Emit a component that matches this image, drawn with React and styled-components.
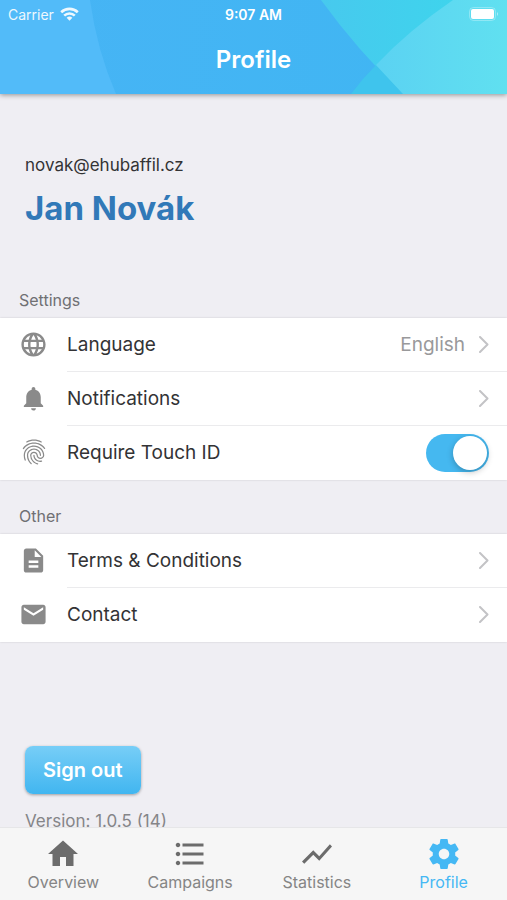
import { useState } from "react";
import styled, { createGlobalStyle } from "styled-components";
import {
  MdDescription,
  MdEmail,
  MdFingerprint,
  MdFormatListBulleted,
  MdHome,
  MdLanguage,
  MdNotifications,
  MdShowChart,
} from "react-icons/md";

const GlobalStyle = createGlobalStyle`
  * {
    box-sizing: border-box;
  }
  body {
    margin: 0;
    background: #efeef3;
    color: #333335;
    font-family: Inter, "Liberation Sans", sans-serif;
  }
`;

const Page = styled.div`
  display: flex;
  flex-direction: column;
  height: 100vh;
`;
const Header = styled.header`
  position: relative;
  z-index: 1;
  flex: none;
  color: white;
  background: linear-gradient(90deg, #47b4f5, #3fb6f2);
  box-shadow: 0 1px 5px rgba(0, 0, 0, 0.4);
`;
const HeaderArt = styled.svg`
  position: absolute;
  inset: 0;
  z-index: -1;
  width: 100%;
  height: 100%;
`;
const StatusBar = styled.div`
  display: grid;
  grid-template-columns: 1fr auto 1fr;
  align-items: center;
  height: 28px;
  padding: 0 8px;
  font-size: 14px;
`;
const Carrier = styled.span`
  display: flex;
  align-items: center;
  gap: 6px;
  opacity: 0.9;
`;
const Time = styled.time`
  font-weight: 600;
`;
const Battery = styled.svg`
  justify-self: end;
`;
const Title = styled.h1`
  margin: 0;
  padding-top: 14px;
  height: 66px;
  font-size: 24px;
  line-height: 36px;
  font-weight: 600;
  text-align: center;
`;

const Main = styled.main`
  flex: 1;
  min-height: 0;
  overflow-y: auto;
  scrollbar-width: none;
`;
const User = styled.section`
  padding: 59px 25px 56px;
`;
const Email = styled.p`
  margin: 0;
  font-size: 17px;
  line-height: 24px;
`;
const Name = styled.h2`
  margin: 11px 0 0;
  color: #3179b8;
  font-size: 33px;
  line-height: 40px;
  font-weight: 700;
`;
const GroupTitle = styled.h3`
  margin: 0;
  padding: 4px 19px 6px;
  color: #707073;
  font-size: 16px;
  line-height: 24px;
  font-weight: 400;
`;
const List = styled.ul`
  margin: 0 0 20px;
  padding: 0;
  list-style: none;
  background: white;
  box-shadow: 0 0 2px rgba(0, 0, 0, 0.15);
`;
const Item = styled.li`
  display: flex;
  align-items: stretch;
  height: 54px;
  color: #8a8a8a;
`;
const ItemIcon = styled.span`
  display: flex;
  flex: none;
  align-items: center;
  justify-content: center;
  width: 67px;
  padding-bottom: 2px;
`;
const rowStyles = `
  display: flex;
  flex: 1;
  align-items: center;
  gap: 14px;
  padding: 0 18px 0 0;
  border-bottom: 1px solid #ebebed;
  color: #333335;
  font-size: 19px;
  text-decoration: none;
  li:last-child > & {
    border-bottom-color: transparent;
  }
`;
const RowLink = styled.a`
  ${rowStyles}
`;
const RowLabel = styled.label`
  ${rowStyles}
`;
const RowText = styled.span`
  flex: 1;
`;
const RowValue = styled.span`
  color: #99999b;
`;
const Switch = styled.input`
  appearance: none;
  display: flex;
  justify-content: ${(props) => (props.checked ? "flex-end" : "flex-start")};
  width: 63px;
  height: 38px;
  margin: 0;
  padding: 2px;
  border-radius: 19px;
  background: ${(props) => (props.checked ? "#45b8f0" : "#d8d8dc")};
  cursor: pointer;
  &::after {
    content: "";
    width: 34px;
    height: 34px;
    border-radius: 50%;
    background: white;
    box-shadow: 0 2px 6px rgba(0, 0, 0, 0.25);
  }
`;

const Session = styled.section`
  padding: 84px 25px 24px;
`;
const SignOut = styled.button`
  display: block;
  height: 48px;
  padding: 0 18px;
  border: 0;
  border-radius: 8px;
  background: linear-gradient(#77cef7, #41b6f0);
  box-shadow: 0 1px 3px rgba(0, 0, 0, 0.35);
  color: white;
  font: inherit;
  font-size: 20px;
  font-weight: 600;
  cursor: pointer;
`;
const Version = styled.p`
  margin: 15px 0 0;
  color: #858588;
  font-size: 17px;
  line-height: 24px;
`;

const TabBar = styled.nav`
  display: flex;
  flex: none;
  height: 73px;
  border-top: 1px solid #e6e6e8;
  background: #f6f6f6;
`;
const Tab = styled.a`
  display: flex;
  flex: 1;
  flex-direction: column;
  align-items: center;
  padding-top: 8px;
  color: ${(props) => (props.$active ? "#45b8f4" : "#858585")};
  font-size: 16px;
  line-height: 20px;
  text-decoration: none;
  svg {
    color: ${(props) => (props.$active ? "#45b8f4" : "#6c6c6c")};
  }
`;

const Chevron = () => (
  <svg width="10" height="17" viewBox="0 0 10 17" fill="none">
    <path
      d="M1 1L8.5 8.5L1 16"
      stroke="#c3c3c6"
      strokeWidth="2"
      strokeLinecap="round"
      strokeLinejoin="round"
    />
  </svg>
);

const Wifi = () => (
  <svg width="19" height="14" viewBox="0 0 19 14" fill="none" stroke="white">
    <path d="M1.2 5.2A12 12 0 0 1 17.8 5.2" strokeWidth="2.6" />
    <path d="M4.2 8.6A7.6 7.6 0 0 1 14.8 8.6" strokeWidth="2.6" />
    <path
      d="M9.5 13.8L6.6 10.8A4.2 4.2 0 0 1 12.4 10.8Z"
      fill="white"
      stroke="none"
    />
  </svg>
);

const Gear = ({ size }) => (
  <svg width={size} height={size} viewBox="0 0 24 24" fill="currentColor">
    <path d="M19.43 12.98c.04-.32.07-.64.07-.98s-.03-.66-.07-.98l2.11-1.65c.19-.15.24-.42.12-.64l-2-3.46c-.12-.22-.39-.3-.61-.22l-2.49 1c-.52-.4-1.08-.73-1.69-.98l-.38-2.65C14.46 2.18 14.25 2 14 2h-4c-.25 0-.46.18-.49.42l-.38 2.65c-.61.25-1.17.59-1.69.98l-2.49-1c-.23-.09-.49 0-.61.22l-2 3.46c-.13.22-.07.49.12.64l2.11 1.65c-.04.32-.07.65-.07.98s.03.66.07.98l-2.11 1.65c-.19.15-.24.42-.12.64l2 3.46c.12.22.39.3.61.22l2.49-1c.52.4 1.08.73 1.69.98l.38 2.65c.03.24.24.42.49.42h4c.25 0 .46-.18.49-.42l.38-2.65c.61-.25 1.17-.59 1.69-.98l2.49 1c.23.09.49 0 .61-.22l2-3.46c.12-.22.07-.49-.12-.64l-2.11-1.65zM12 15.5c-1.93 0-3.5-1.57-3.5-3.5s1.57-3.5 3.5-3.5 3.5 1.57 3.5 3.5-1.57 3.5-3.5 3.5z" />
  </svg>
);

const tabs = [
  { name: "Overview", Icon: MdHome },
  { name: "Campaigns", Icon: MdFormatListBulleted },
  { name: "Statistics", Icon: MdShowChart },
  { name: "Profile", Icon: Gear },
];

const App = () => {
  const [touchId, setTouchId] = useState(true);

  return (
    <Page>
      <GlobalStyle />
      <Header>
        <HeaderArt viewBox="0 0 507 94" preserveAspectRatio="none">
          <defs>
            <linearGradient id="cyan" x1="0" x2="1" y1="0" y2="0">
              <stop offset="0" stopColor="#47c9ee" />
              <stop offset="1" stopColor="#3bd8ec" />
            </linearGradient>
            <linearGradient id="pale" x1="0" x2="1" y1="0" y2="0">
              <stop offset="0" stopColor="#5bd2f2" />
              <stop offset="1" stopColor="#60e0f0" />
            </linearGradient>
          </defs>
          <path d="M0 0H90Q97 50 116 94H0Z" fill="#52bbf9" />
          <path d="M321 0H507V94H403Q358 51 321 0Z" fill="url(#cyan)" />
          <path d="M376 65L403 94H351Q362 79 376 65Z" fill="#3fc4ed" />
          <path d="M453 0H507V94H403L376 65Q409 30 453 0Z" fill="url(#pale)" />
        </HeaderArt>
        <StatusBar>
          <Carrier>
            Carrier
            <Wifi />
          </Carrier>
          <Time>9:07 AM</Time>
          <Battery width="30" height="14" viewBox="0 0 30 14">
            <rect
              x="0.5"
              y="0.5"
              width="26"
              height="13"
              rx="4"
              fill="none"
              stroke="white"
              strokeOpacity="0.3"
            />
            <rect x="2" y="2" width="23" height="10" rx="2" fill="white" />
            <path d="M28 5Q30 7 28 9Z" fill="white" fillOpacity="0.5" />
          </Battery>
        </StatusBar>
        <Title>Profile</Title>
      </Header>

      <Main>
        <User>
          <Email>novak@ehubaffil.cz</Email>
          <Name>Jan Novák</Name>
        </User>

        <GroupTitle>Settings</GroupTitle>
        <List>
          <Item>
            <ItemIcon>
              <MdLanguage size={29} />
            </ItemIcon>
            <RowLink href="#language">
              <RowText>Language</RowText>
              <RowValue>English</RowValue>
              <Chevron />
            </RowLink>
          </Item>
          <Item>
            <ItemIcon>
              <MdNotifications size={29} />
            </ItemIcon>
            <RowLink href="#notifications">
              <RowText>Notifications</RowText>
              <Chevron />
            </RowLink>
          </Item>
          <Item>
            <ItemIcon>
              <MdFingerprint size={30} />
            </ItemIcon>
            <RowLabel htmlFor="touch-id">
              <RowText>Require Touch ID</RowText>
              <Switch
                id="touch-id"
                type="checkbox"
                role="switch"
                checked={touchId}
                onChange={(e) => setTouchId(e.target.checked)}
              />
            </RowLabel>
          </Item>
        </List>

        <GroupTitle>Other</GroupTitle>
        <List>
          <Item>
            <ItemIcon>
              <MdDescription size={29} />
            </ItemIcon>
            <RowLink href="#terms">
              <RowText>Terms &amp; Conditions</RowText>
              <Chevron />
            </RowLink>
          </Item>
          <Item>
            <ItemIcon>
              <MdEmail size={29} />
            </ItemIcon>
            <RowLink href="#contact">
              <RowText>Contact</RowText>
              <Chevron />
            </RowLink>
          </Item>
        </List>

        <Session>
          <SignOut type="button">Sign out</SignOut>
          <Version>Version: 1.0.5 (14)</Version>
        </Session>
      </Main>

      <TabBar>
        {tabs.map(({ name, Icon }) => (
          <Tab
            key={name}
            href={`#${name.toLowerCase()}`}
            $active={name === "Profile"}
          >
            <Icon size={36} />
            {name}
          </Tab>
        ))}
      </TabBar>
    </Page>
  );
};

export default App;
